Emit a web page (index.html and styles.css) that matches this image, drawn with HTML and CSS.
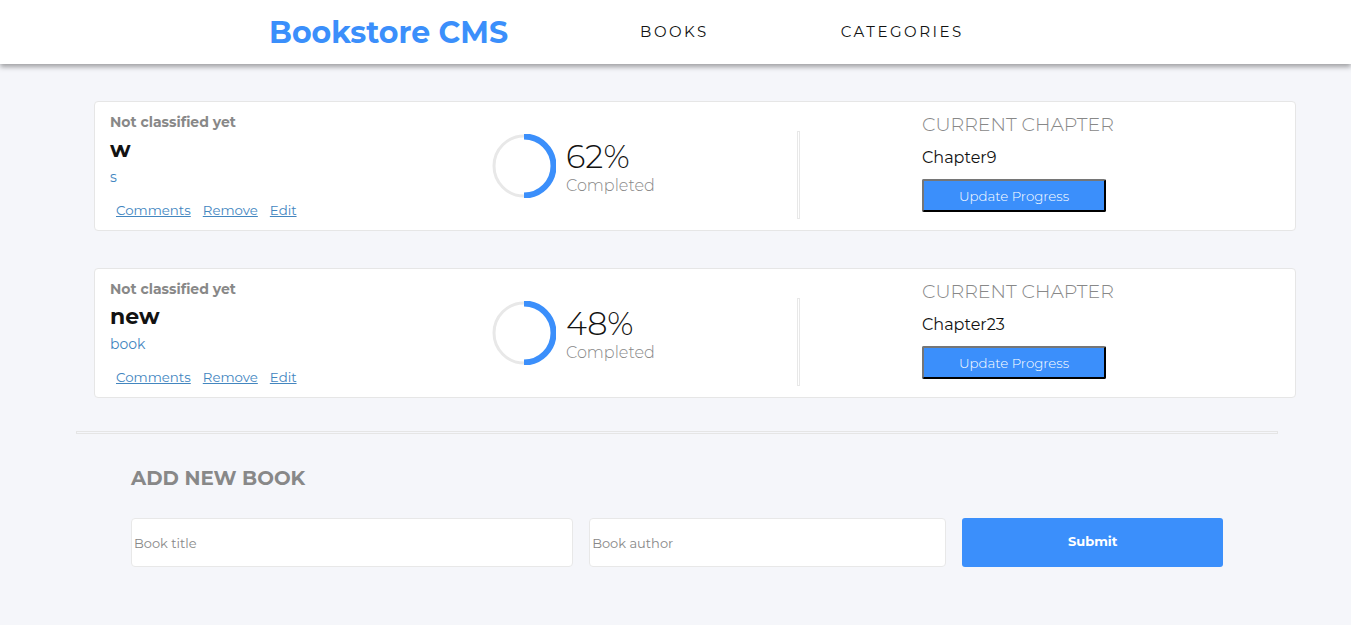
FILE: index.html
```html
<!DOCTYPE html>
<html lang="en">
<head>
<meta charset="utf-8">
<title>Bookstore CMS</title>
<link rel="stylesheet" href="styles.css">
</head>
<body>
<header class="topbar">
  <div class="logo">Bookstore CMS</div>
  <nav class="nav">
    <a class="nav-link nav-books" href="#">BOOKS</a>
    <a class="nav-link" href="#">CATEGORIES</a>
  </nav>
</header>
<main class="main">
  <ul class="books">
    <li class="card">
      <div class="info">
        <p class="genre">Not classified yet</p>
        <h2 class="title">w</h2>
        <p class="author">s</p>
        <div class="actions">
          <a href="#">Comments</a>
          <a href="#">Remove</a>
          <a href="#">Edit</a>
        </div>
      </div>
      <div class="progress">
        <svg class="ring" width="64" height="64" viewBox="0 0 64 64">
          <circle cx="32" cy="32" r="30" fill="none" stroke="#e8e8e8" stroke-width="3"/>
          <path d="M32 2.5 A29.5 29.5 0 0 1 32 61.5" fill="none" stroke="#3b8ffb" stroke-width="6"/>
        </svg>
        <div class="pct">
          <div class="pct-num">62%</div>
          <div class="pct-label">Completed</div>
        </div>
      </div>
      <div class="divider"></div>
      <div class="chapter">
        <div class="chapter-head">CURRENT CHAPTER</div>
        <div class="chapter-name">Chapter9</div>
        <button class="update" type="button">Update Progress</button>
      </div>
    </li>
    <li class="card">
      <div class="info">
        <p class="genre">Not classified yet</p>
        <h2 class="title">new</h2>
        <p class="author">book</p>
        <div class="actions">
          <a href="#">Comments</a>
          <a href="#">Remove</a>
          <a href="#">Edit</a>
        </div>
      </div>
      <div class="progress">
        <svg class="ring" width="64" height="64" viewBox="0 0 64 64">
          <circle cx="32" cy="32" r="30" fill="none" stroke="#e8e8e8" stroke-width="3"/>
          <path d="M32 2.5 A29.5 29.5 0 0 1 32 61.5" fill="none" stroke="#3b8ffb" stroke-width="6"/>
        </svg>
        <div class="pct">
          <div class="pct-num">48%</div>
          <div class="pct-label">Completed</div>
        </div>
      </div>
      <div class="divider"></div>
      <div class="chapter">
        <div class="chapter-head">CURRENT CHAPTER</div>
        <div class="chapter-name">Chapter23</div>
        <button class="update" type="button">Update Progress</button>
      </div>
    </li>
  </ul>
  <div class="rule"></div>
  <section class="add">
    <h2 class="add-title">ADD NEW BOOK</h2>
    <form class="add-form">
      <input class="field field-title" type="text" placeholder="Book title">
      <input class="field field-author" type="text" placeholder="Book author">
      <button class="submit" type="button">Submit</button>
    </form>
  </section>
</main>
</body>
</html>
```
FILE: styles.css
```css
* { box-sizing: border-box; }
html, body { margin: 0; padding: 0; }
body {
  background: #f5f6fa;
  font-family: "Montserrat", "Open Sans", "DejaVu Sans", sans-serif;
  color: #121212;
}
.topbar {
  height: 64px;
  background: #fff;
  display: flex;
  align-items: center;
  padding-left: 269px;
  box-shadow: 0 3px 5px rgba(0, 0, 0, 0.35);
  position: relative;
  z-index: 1;
}
.logo {
  font-size: 30px;
  font-weight: 700;
  color: #3b8ffb;
}
.nav {
  display: flex;
  margin-left: 132px;
  margin-top: -2px;
}
.nav-link {
  font-size: 15px;
  letter-spacing: 2.5px;
  color: #121212;
  text-decoration: none;
}
.nav-books { margin-right: 132px; }
.main { padding-top: 37px; }
.books {
  list-style: none;
  margin: 0 55px 0 94px;
  padding: 0;
  display: flex;
  flex-direction: column;
  gap: 37px;
}
.card {
  background: #fff;
  border: 1px solid #e6e6e6;
  border-radius: 4px;
  height: 130px;
  display: flex;
  align-items: flex-start;
  padding: 11px 15px 0;
}
.info { width: 382px; }
.genre {
  margin: 0;
  font-size: 14px;
  font-weight: 700;
  color: #888;
  line-height: 18px;
}
.title {
  margin: 6px 0 0;
  font-size: 22px;
  font-weight: 700;
  line-height: 26px;
}
.author {
  margin: 5px 0 0;
  font-size: 14px;
  color: #4386bf;
  line-height: 18px;
}
.actions {
  display: flex;
  gap: 12px;
  margin: 15px 0 0 6px;
}
.actions a {
  font-size: 13.33px;
  color: #4386bf;
  line-height: 18px;
}
.progress {
  width: 305px;
  display: flex;
  align-items: center;
  margin-top: 21px;
}
.ring { display: block; flex: none; }
.pct { margin-left: 10px; margin-top: 2px; }
.pct-num {
  font-size: 32px;
  font-weight: 300;
  line-height: 36px;
}
.pct-label {
  font-size: 16px;
  color: #888;
  font-weight: 300;
  line-height: 20px;
  margin-top: 1px;
}
.divider {
  width: 3px;
  height: 88px;
  border: 1px solid #e8e8e8;
  margin-top: 18px;
  flex: none;
}
.chapter { margin-left: 122px; padding-top: 1px; }
.chapter-head {
  font-size: 19px;
  font-weight: 300;
  color: #888;
  line-height: 22px;
}
.chapter-name {
  font-size: 16px;
  line-height: 20px;
  margin-top: 12px;
}
.update {
  margin-top: 11px;
  width: 184px;
  height: 33px;
  background: #3b8ffb;
  color: #fff;
  font-family: inherit;
  font-size: 13.33px;
  font-weight: 300;
  border: 2px outset #767676;
  border-color: #767676 #222 #222 #767676;
  border-radius: 2px;
}
.rule {
  margin: 33px 73px 0 76px;
  height: 3px;
  border: 1px solid #e5e5e5;
}
.add { padding: 32px 128px 0 131px; }
.add-title {
  margin: 0;
  font-size: 19.8px;
  font-weight: 700;
  color: #888;
  line-height: 24px;
}
.add-form {
  display: flex;
  margin-top: 28px;
  gap: 16px;
}
.field {
  height: 49px;
  background: #fff;
  border: 1px solid #e8e8e8;
  border-radius: 4px;
  font-family: inherit;
  font-size: 13px;
  padding: 0 2px;
  color: #121212;
  outline: none;
}
.field::placeholder { color: #888; }
.field-title { width: 443px; }
.field-author { width: 358px; }
.submit {
  width: 261px;
  height: 49px;
  padding-bottom: 4px;
  background: #3b8ffb;
  color: #fff;
  border: none;
  border-radius: 3px;
  font-family: inherit;
  font-weight: 700;
  font-size: 13px;
}
```
